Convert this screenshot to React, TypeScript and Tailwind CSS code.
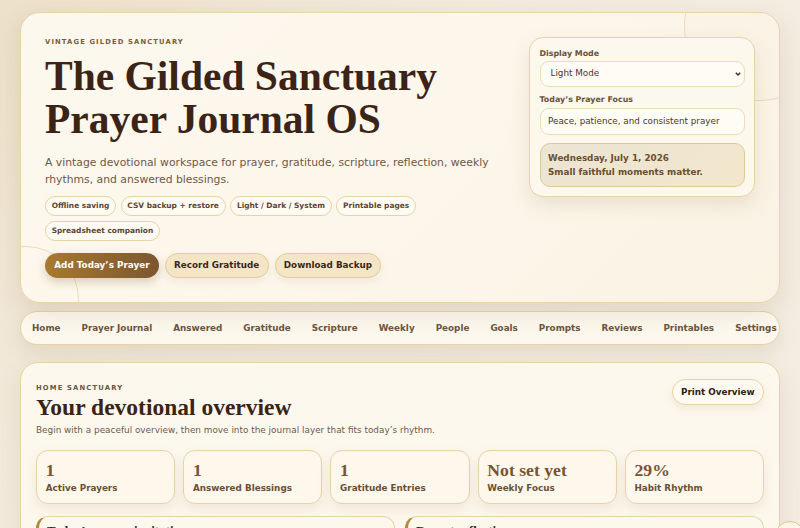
import { useState } from "react";

const chips = [
  "Offline saving",
  "CSV backup + restore",
  "Light / Dark / System",
  "Printable pages",
  "Spreadsheet companion",
];

const navItems = [
  "Home",
  "Prayer Journal",
  "Answered",
  "Gratitude",
  "Scripture",
  "Weekly",
  "People",
  "Goals",
  "Prompts",
  "Reviews",
  "Printables",
  "Settings",
];

const stats = [
  { value: "1", label: "Active Prayers" },
  { value: "1", label: "Answered Blessings" },
  { value: "1", label: "Gratitude Entries" },
  { value: "Not set yet", label: "Weekly Focus" },
  { value: "29%", label: "Habit Rhythm" },
];

const App = () => {
  const [mode, setMode] = useState("light");
  const [focus, setFocus] = useState("Peace, patience, and consistent prayer");

  return (
    <div className="min-h-screen overflow-hidden bg-[radial-gradient(circle_at_0%_0%,#ece0c9_0%,#f2eadc_45%,#f4eee3_100%)] px-5 pt-3 font-['DejaVu_Sans',sans-serif] text-[#3a2818]">
      {/* hero */}
      <section className="relative overflow-hidden rounded-[20px] border border-[#e7d4a9] bg-[linear-gradient(135deg,#fdf8ee_0%,#fcf6ea_60%,#faf2e3_100%)] p-6 shadow-[0_10px_26px_rgba(130,95,40,0.14)]">
        <div className="absolute -right-[55px] -top-[62px] h-[150px] w-[150px] rounded-full border border-[#e9dbbd] bg-[#f9f1e2]/40" />
        <div className="absolute -bottom-[50px] -left-[48px] h-[106px] w-[106px] rounded-full border border-[#e9dbbd]" />

        <div className="relative grid grid-cols-[1fr_226px] items-start gap-[29px]">
          <div>
            <p className="text-[6.8px] font-bold uppercase leading-[10px] tracking-[0.165em] text-[#7d5c3a]">
              Vintage Gilded Sanctuary
            </p>
            <h1 className="mt-[7.5px] font-['Liberation_Serif',serif] text-[41.5px] font-bold leading-[43px] text-[#3b2417]">
              The Gilded Sanctuary
              <br />
              Prayer Journal OS
            </h1>
            <p className="mt-[13px] text-[10.8px] leading-[17px] text-[#6e5746]">
              A vintage devotional workspace for prayer, gratitude, scripture,
              reflection, weekly rhythms, and answered blessings.
            </p>

            <div className="mt-2 flex flex-wrap gap-x-[4.7px] gap-y-[4.7px]">
              {chips.map((chip) => (
                <span
                  key={chip}
                  className="flex h-[20.5px] items-center rounded-full border border-[#e7d3a6] bg-[#fffbf3] px-[5.7px] text-[7.45px] font-bold text-[#5c4533]"
                >
                  {chip}
                </span>
              ))}
            </div>

            <div className="mt-[11.5px] flex gap-[6px]">
              <button className="h-[25.5px] rounded-full bg-[linear-gradient(90deg,#a8792f,#7b5631)] px-[9.3px] text-[8.8px] font-bold text-white shadow-[0_4px_10px_rgba(120,80,30,0.25)]">
                Add Today’s Prayer
              </button>
              <button className="h-[25.5px] rounded-full border border-[#e2cb99] bg-[#f4e5c7] px-[8.3px] text-[8.8px] font-bold text-[#3a2818] shadow-[0_4px_10px_rgba(120,80,30,0.08)]">
                Record Gratitude
              </button>
              <button className="h-[25.5px] rounded-full border border-[#e2cb99] bg-[#f4e5c7] px-[8.3px] text-[8.8px] font-bold text-[#3a2818] shadow-[0_4px_10px_rgba(120,80,30,0.08)]">
                Download Backup
              </button>
            </div>
          </div>

          {/* quick settings panel */}
          <div className="rounded-[14px] border border-[#e7d3a6] bg-[#fdf8ee] p-[9.5px] shadow-[0_8px_20px_rgba(120,90,40,0.13)]">
            <label className="mb-[2.5px] block text-[7.9px] font-bold leading-[11px] text-[#6b5237]">
              Display Mode
            </label>
            <div className="relative">
              <select
                value={mode}
                onChange={(e) => setMode(e.target.value)}
                className="block h-[25.6px] w-full appearance-none rounded-[9px] border border-[#ecdcb8] bg-[#fffcf5] pl-[10px] pr-4 text-[8.8px] text-[#4a3828]"
              >
                <option value="light">Light Mode</option>
                <option value="dark">Dark Mode</option>
                <option value="system">System</option>
              </select>
              <svg
                className="pointer-events-none absolute right-[4px] top-[10.5px] h-[4px] w-[6px]"
                viewBox="0 0 6 4"
                fill="none"
              >
                <path d="M0.8 0.8 3 3 5.2 0.8" stroke="#3a2818" strokeWidth="1.3" />
              </svg>
            </div>

            <label className="mb-[2.5px] mt-[7.5px] block text-[7.9px] font-bold leading-[11px] text-[#6b5237]">
              Today’s Prayer Focus
            </label>
            <input
              value={focus}
              onChange={(e) => setFocus(e.target.value)}
              className="block h-[27.7px] w-full rounded-[9px] border border-[#ecdcb8] bg-[#fffcf5] px-[7.5px] text-[8.8px] text-[#4a3828] outline-none"
            />

            <div className="mt-[7.3px] rounded-[10px] border border-[#e0c995] bg-[linear-gradient(135deg,#ebe5d4,#f3e6cc)] px-[7.5px] py-[7px] text-[8.8px] font-bold leading-[14px] text-[#6b5030]">
              <p>Wednesday, July 1, 2026</p>
              <p>Small faithful moments matter.</p>
            </div>
          </div>
        </div>
      </section>

      {/* section nav */}
      <nav className="mt-[8.3px] flex h-[34px] items-center gap-[21px] overflow-hidden rounded-full border border-[#e7d3a6] bg-[#fdf8ee] pl-[11px] shadow-[0_8px_18px_rgba(120,90,40,0.12)]">
        {navItems.map((item) => (
          <span
            key={item}
            className="shrink-0 whitespace-nowrap text-[8.8px] font-bold text-[#6b5540]"
          >
            {item}
          </span>
        ))}
      </nav>

      {/* overview */}
      <main className="mt-[17px] rounded-[18px] border border-[#e7d3a6] bg-[#fdf8ee] px-[15px] pt-[16px] pb-4 shadow-[0_10px_26px_rgba(130,95,40,0.12)]">
        <div className="flex items-start justify-between">
          <div className="pt-[4px]">
            <p className="text-[6.8px] font-bold uppercase leading-[10px] tracking-[0.17em] text-[#6b5540]">
              Home Sanctuary
            </p>
            <h2 className="mt-[1px] font-['Liberation_Serif',serif] text-[23.5px] font-bold leading-[26px] text-[#3b2417]">
              Your devotional overview
            </h2>
            <p className="mt-[3.8px] text-[8.9px] leading-[13px] text-[#6e5a4a]">
              Begin with a peaceful overview, then move into the journal layer
              that fits today’s rhythm.
            </p>
          </div>
          <button className="h-[25.7px] rounded-full border border-[#e7d3a6] bg-[#fffaf1] px-[8.3px] text-[8.8px] font-bold text-[#2f2016] shadow-[0_4px_10px_rgba(120,90,40,0.1)]">
            Print Overview
          </button>
        </div>

        <div className="mt-[13px] grid grid-cols-5 gap-2">
          {stats.map((s) => (
            <div
              key={s.label}
              className="h-[53.7px] rounded-[12px] border border-[#e7d3a6] bg-[#fdf7ec] px-[8.7px] pt-[8.7px] shadow-[0_6px_14px_rgba(120,90,40,0.1)]"
            >
              <p className="font-['Liberation_Serif',serif] text-[17.7px] font-bold leading-[20px] text-[#7a5430]">
                {s.value}
              </p>
              <p className="mt-[2px] text-[8.8px] font-bold leading-[12px] text-[#6b5035]">
                {s.label}
              </p>
            </div>
          ))}
        </div>

        <div className="mt-[11.6px] grid grid-cols-2 gap-[10px]">
          <div className="h-[80px] rounded-[12px] border border-[#e7d3a6] border-l-[3px] border-l-[#b48a3c] bg-[#fdf8ee] px-[8px] pt-[5px]">
            <h3 className="font-['Liberation_Serif',serif] text-[13px] font-bold leading-[18px] text-[#3b2417]">
              Today’s prayer invitation
            </h3>
          </div>
          <div className="h-[80px] rounded-[12px] border border-[#e7d3a6] border-l-[3px] border-l-[#b48a3c] bg-[#fdf8ee] px-[8px] pt-[5px]">
            <h3 className="font-['Liberation_Serif',serif] text-[13px] font-bold leading-[18px] text-[#3b2417]">
              Recent reflections
            </h3>
          </div>
        </div>
      </main>

      {/* back-to-top button */}
      <button className="fixed left-[775px] top-[521px] h-[30px] w-[30px] rounded-full border border-[#dcc38e] bg-[#fbf5ea]" />
    </div>
  );
};

export default App;
